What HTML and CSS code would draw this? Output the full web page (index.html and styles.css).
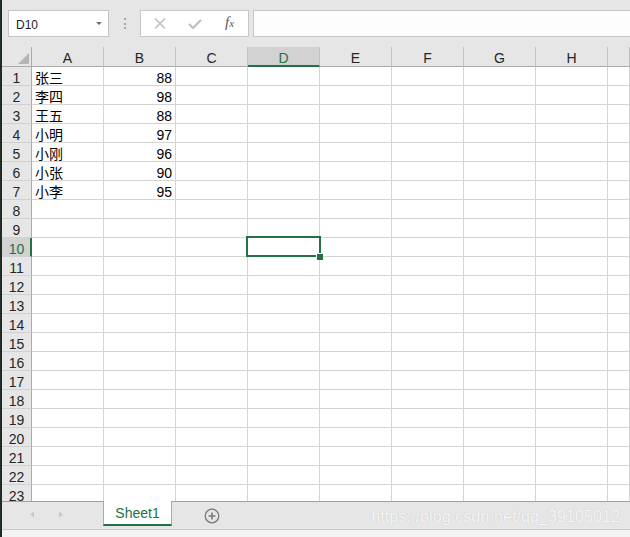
FILE: index.html
```html
<!DOCTYPE html>
<html>
<head>
<meta charset="utf-8">
<link rel="stylesheet" href="styles.css">
</head>
<body>
<div class="app">
  <div class="toolbar">
    <div class="namebox"><span class="ref">D10</span><span class="dd"></span></div>
    <div class="dots"><span></span><span></span><span></span></div>
    <div class="fnbox">
      <svg class="ic-x" width="12" height="11" viewBox="0 0 12 11"><path d="M1 0.5 L11 10.5 M11 0.5 L1 10.5" stroke="#bdbdbd" stroke-width="1.4" fill="none"/></svg>
      <svg class="ic-chk" width="14" height="10" viewBox="0 0 14 10"><path d="M1 5 L5 9 L13 1" stroke="#bdbdbd" stroke-width="2" fill="none"/></svg>
      <span class="fx"><i>f</i><i class="fxx">x</i></span>
    </div>
    <div class="formula"></div>
  </div>

  <div class="sheet">
    <div class="corner"><span class="tri"></span></div><div class="ch">A</div><div class="ch">B</div><div class="ch">C</div><div class="ch sel">D</div><div class="ch">E</div><div class="ch">F</div><div class="ch">G</div><div class="ch">H</div><div class="ch"></div>
    <div class="rh">1</div><div class="c">张三</div><div class="c n">88</div><div class="c"></div><div class="c"></div><div class="c"></div><div class="c"></div><div class="c"></div><div class="c"></div><div class="c"></div>
    <div class="rh">2</div><div class="c">李四</div><div class="c n">98</div><div class="c"></div><div class="c"></div><div class="c"></div><div class="c"></div><div class="c"></div><div class="c"></div><div class="c"></div>
    <div class="rh">3</div><div class="c">王五</div><div class="c n">88</div><div class="c"></div><div class="c"></div><div class="c"></div><div class="c"></div><div class="c"></div><div class="c"></div><div class="c"></div>
    <div class="rh">4</div><div class="c">小明</div><div class="c n">97</div><div class="c"></div><div class="c"></div><div class="c"></div><div class="c"></div><div class="c"></div><div class="c"></div><div class="c"></div>
    <div class="rh">5</div><div class="c">小刚</div><div class="c n">96</div><div class="c"></div><div class="c"></div><div class="c"></div><div class="c"></div><div class="c"></div><div class="c"></div><div class="c"></div>
    <div class="rh">6</div><div class="c">小张</div><div class="c n">90</div><div class="c"></div><div class="c"></div><div class="c"></div><div class="c"></div><div class="c"></div><div class="c"></div><div class="c"></div>
    <div class="rh">7</div><div class="c">小李</div><div class="c n">95</div><div class="c"></div><div class="c"></div><div class="c"></div><div class="c"></div><div class="c"></div><div class="c"></div><div class="c"></div>
    <div class="rh">8</div><div class="c"></div><div class="c"></div><div class="c"></div><div class="c"></div><div class="c"></div><div class="c"></div><div class="c"></div><div class="c"></div><div class="c"></div>
    <div class="rh">9</div><div class="c"></div><div class="c"></div><div class="c"></div><div class="c"></div><div class="c"></div><div class="c"></div><div class="c"></div><div class="c"></div><div class="c"></div>
    <div class="rh sel">10</div><div class="c"></div><div class="c"></div><div class="c"></div><div class="c"></div><div class="c"></div><div class="c"></div><div class="c"></div><div class="c"></div><div class="c"></div>
    <div class="rh">11</div><div class="c"></div><div class="c"></div><div class="c"></div><div class="c"></div><div class="c"></div><div class="c"></div><div class="c"></div><div class="c"></div><div class="c"></div>
    <div class="rh">12</div><div class="c"></div><div class="c"></div><div class="c"></div><div class="c"></div><div class="c"></div><div class="c"></div><div class="c"></div><div class="c"></div><div class="c"></div>
    <div class="rh">13</div><div class="c"></div><div class="c"></div><div class="c"></div><div class="c"></div><div class="c"></div><div class="c"></div><div class="c"></div><div class="c"></div><div class="c"></div>
    <div class="rh">14</div><div class="c"></div><div class="c"></div><div class="c"></div><div class="c"></div><div class="c"></div><div class="c"></div><div class="c"></div><div class="c"></div><div class="c"></div>
    <div class="rh">15</div><div class="c"></div><div class="c"></div><div class="c"></div><div class="c"></div><div class="c"></div><div class="c"></div><div class="c"></div><div class="c"></div><div class="c"></div>
    <div class="rh">16</div><div class="c"></div><div class="c"></div><div class="c"></div><div class="c"></div><div class="c"></div><div class="c"></div><div class="c"></div><div class="c"></div><div class="c"></div>
    <div class="rh">17</div><div class="c"></div><div class="c"></div><div class="c"></div><div class="c"></div><div class="c"></div><div class="c"></div><div class="c"></div><div class="c"></div><div class="c"></div>
    <div class="rh">18</div><div class="c"></div><div class="c"></div><div class="c"></div><div class="c"></div><div class="c"></div><div class="c"></div><div class="c"></div><div class="c"></div><div class="c"></div>
    <div class="rh">19</div><div class="c"></div><div class="c"></div><div class="c"></div><div class="c"></div><div class="c"></div><div class="c"></div><div class="c"></div><div class="c"></div><div class="c"></div>
    <div class="rh">20</div><div class="c"></div><div class="c"></div><div class="c"></div><div class="c"></div><div class="c"></div><div class="c"></div><div class="c"></div><div class="c"></div><div class="c"></div>
    <div class="rh">21</div><div class="c"></div><div class="c"></div><div class="c"></div><div class="c"></div><div class="c"></div><div class="c"></div><div class="c"></div><div class="c"></div><div class="c"></div>
    <div class="rh">22</div><div class="c"></div><div class="c"></div><div class="c"></div><div class="c"></div><div class="c"></div><div class="c"></div><div class="c"></div><div class="c"></div><div class="c"></div>
    <div class="rh">23</div><div class="c"></div><div class="c"></div><div class="c"></div><div class="c"></div><div class="c"></div><div class="c"></div><div class="c"></div><div class="c"></div><div class="c"></div>
    <div class="selection"></div>
    <div class="handle"></div>
  </div>

  <div class="tabbar">
    <svg class="nav" width="101" height="27" viewBox="0 0 101 27"><polygon points="28,12.5 32,9.5 32,15.5" fill="#c8c8c8"/><polygon points="57,9.5 61,12.5 57,15.5" fill="#c8c8c8"/></svg>
    <div class="tab">Sheet1</div>
    <svg class="add" width="16" height="16" viewBox="0 0 16 16"><circle cx="8" cy="8" r="6.8" stroke="#7a7a7a" stroke-width="1.3" fill="none"/><path d="M8 4.5 V11.5 M4.5 8 H11.5" stroke="#7a7a7a" stroke-width="1.6"/></svg>
    <div class="watermark">https://blog.csdn.net/qq_39105012</div>
  </div>
  <div class="status"></div>
</div>
</body>
</html>
```
FILE: styles.css
```css
html, body {
  margin: 0;
  padding: 0;
}
body {
  width: 630px;
  height: 537px;
  overflow: hidden;
  font-family: "Liberation Sans", "Noto Sans CJK SC", sans-serif;
  background: #e6e6e6;
}
.app {
  box-sizing: border-box;
  height: 537px;
  border-left: 2px solid #1f2b25;
  display: flex;
  flex-direction: column;
  background: #e6e6e6;
}

/* toolbar */
.toolbar {
  height: 47px;
  flex: none;
  box-sizing: border-box;
  padding: 10px 0 0 6px;
  display: flex;
  align-items: flex-start;
}
.namebox {
  box-sizing: border-box;
  width: 101px;
  height: 27px;
  background: #fff;
  border: 1px solid #c6c6c6;
  display: flex;
  align-items: center;
  padding: 2px 0 0 7px;
  font-size: 12px;
  line-height: 14px;
  color: #222;
}
.dd {
  margin-left: auto;
  margin-right: 6px;
  margin-top: -2px;
  width: 0;
  height: 0;
  border-left: 3px solid transparent;
  border-right: 3px solid transparent;
  border-top: 3px solid #707070;
}
.dots {
  width: 31px;
  height: 27px;
  display: flex;
  flex-direction: column;
  align-items: center;
  padding-top: 8px;
  box-sizing: border-box;
  gap: 2.5px;
}
.dots span {
  width: 2px;
  height: 2px;
  background: #a6a6a6;
}
.fnbox {
  box-sizing: border-box;
  width: 109px;
  height: 27px;
  background: #fff;
  border: 1px solid #c6c6c6;
  display: flex;
  align-items: center;
}
.ic-x {
  margin-left: 13px;
  margin-top: -1px;
}
.ic-chk {
  margin-left: 22px;
  margin-top: 1px;
}
.fx {
  margin-left: 23px;
  font-family: "Liberation Serif", serif;
  color: #5a5a5a;
  font-size: 15px;
  line-height: 16px;
  margin-top: -2px;
}
.fx i {
  font-style: italic;
}
.fxx {
  font-size: 11px;
}
.formula {
  box-sizing: border-box;
  flex: 1;
  height: 27px;
  margin-left: 4px;
  background: #fdfdfd;
  border: 1px solid #c6c6c6;
  border-right: none;
}

/* sheet */
.sheet {
  position: relative;
  flex: none;
  height: 454px;
  overflow: hidden;
  background: #fff;
  display: grid;
  grid-template-columns: 30px repeat(8, 72px) 1fr;
  grid-template-rows: 20px;
  grid-auto-rows: 19px;
  font-size: 14px;
}
.sheet > div {
  box-sizing: border-box;
  overflow: hidden;
  white-space: nowrap;
}
.corner {
  background: #e6e6e6;
  border-right: 1px solid #ababab;
  border-bottom: 1px solid #ababab;
  display: flex;
  justify-content: flex-end;
  align-items: flex-end;
  padding: 0 2px 2px 0;
}
.tri {
  width: 0;
  height: 0;
  border-left: 11px solid transparent;
  border-bottom: 11px solid #b5b5b5;
}
.ch {
  background: #e6e6e6;
  border-right: 1px solid #c2c2c2;
  border-bottom: 1px solid #ababab;
  text-align: center;
  padding-top: 4px;
  line-height: 15px;
  color: #262626;
}
.ch.sel {
  background: #d2d2d2;
  color: #217346;
  border-bottom: 2px solid #217346;
}
.rh {
  background: #e6e6e6;
  border-right: 1px solid #ababab;
  border-bottom: 1px solid #d0d0d0;
  text-align: center;
  padding-top: 3px;
  line-height: 16px;
  color: #262626;
}
.rh.sel {
  background: #d2d2d2;
  color: #217346;
  border-right: 2px solid #217346;
  padding-left: 1px;
}
.c {
  border-right: 1px solid #d4d4d4;
  border-bottom: 1px solid #d4d4d4;
  padding: 3px 3px 0 3px;
  line-height: 16px;
  color: #000;
}
.c.n {
  text-align: right;
}
.selection {
  position: absolute;
  left: 244px;
  top: 189px;
  width: 75px;
  height: 21px;
  border: 2px solid #217346;
  pointer-events: none;
}
.handle {
  position: absolute;
  left: 314px;
  top: 206px;
  width: 7px;
  height: 7px;
  background: #217346;
  border-left: 1px solid #fff;
  border-top: 1px solid #fff;
}

/* tab bar */
.tabbar {
  position: relative;
  flex: none;
  box-sizing: border-box;
  height: 29px;
  border-top: 1px solid #9f9f9f;
  border-bottom: 1px solid #cacaca;
  display: flex;
  align-items: center;
  background: #e6e6e6;
}
.nav {
  flex: none;
}
.tab {
  box-sizing: border-box;
  flex: none;
  width: 69px;
  height: 25px;
  align-self: flex-start;
  margin-top: -1px;
  background: #fff;
  border-left: 1px solid #ababab;
  border-right: 1px solid #ababab;
  border-bottom: 2px solid #217346;
  text-align: center;
  font-size: 14px;
  line-height: 22px;
  padding-top: 1px;
  color: #217346;
}
.add {
  margin-left: 32px;
  flex: none;
}
.watermark {
  position: absolute;
  right: 10px;
  top: 6px;
  font-size: 16px;
  line-height: 18px;
  color: #f6f6f6;
  text-shadow: 0 0 1px #b9b9b9;
  letter-spacing: 0.1px;
}
.status {
  flex: 1;
  background: #f3f3f3;
}
```
